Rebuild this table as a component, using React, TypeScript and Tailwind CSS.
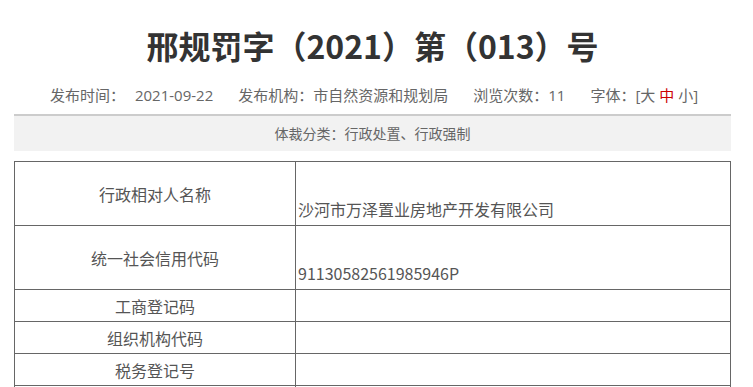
const rows = [
  { label: "行政相对人名称", value: "沙河市万泽置业房地产开发有限公司", tall: true },
  { label: "统一社会信用代码", value: "91130582561985946P", tall: true },
  { label: "工商登记码", value: "" },
  { label: "组织机构代码", value: "" },
  { label: "税务登记号", value: "" },
  { label: "", value: "" },
];

const App = () => {
  return (
    <div className="bg-white overflow-hidden h-[387px] font-['Microsoft_YaHei','Noto_Sans_CJK_SC',sans-serif]">
      <div className="ml-[14px] w-[717px] pt-[20px]">
        <h1 className="text-center text-[32px] leading-[50px] font-bold text-[#333]">
          邢规罚字（2021）第（013）号
        </h1>

        {/* meta line */}
        <div className="mt-[13px] flex justify-center items-center gap-[25px] text-[15px] leading-[24px] text-[#666] pl-[3px] font-['Open_Sans','Noto_Sans_CJK_SC',sans-serif]">
          <span>
            发布时间：<span className="ml-[10px]">2021-09-22</span>
          </span>
          <span>发布机构：市自然资源和规划局</span>
          <span>浏览次数：11</span>
          <span>
            字体：[大 <span className="text-[#cc0000]">中</span> 小]
          </span>
        </div>

        <div className="mt-[7px] border-t-2 border-[#cccccc] bg-[#f2f2f2] h-[37px] flex items-center justify-center text-[14px] text-[#666]">
          体裁分类：行政处置、行政强制
        </div>

        <table className="mt-[10px] w-full border-collapse text-[16px] text-[#555] font-['SimSun','Noto_Sans_CJK_SC',sans-serif]">
          <tbody>
            {rows.map((r, i) => (
              <tr key={i} className={r.tall ? "h-[64px]" : "h-[32px]"}>
                <td className="w-[281px] border border-[#666] text-center align-middle leading-[20px] p-0">
                  {r.label}
                </td>
                <td className="border border-[#666] align-bottom leading-[20px] p-0 pl-[2px] pb-[6px]">
                  {r.value}
                </td>
              </tr>
            ))}
          </tbody>
        </table>
      </div>
    </div>
  );
};

export default App;
